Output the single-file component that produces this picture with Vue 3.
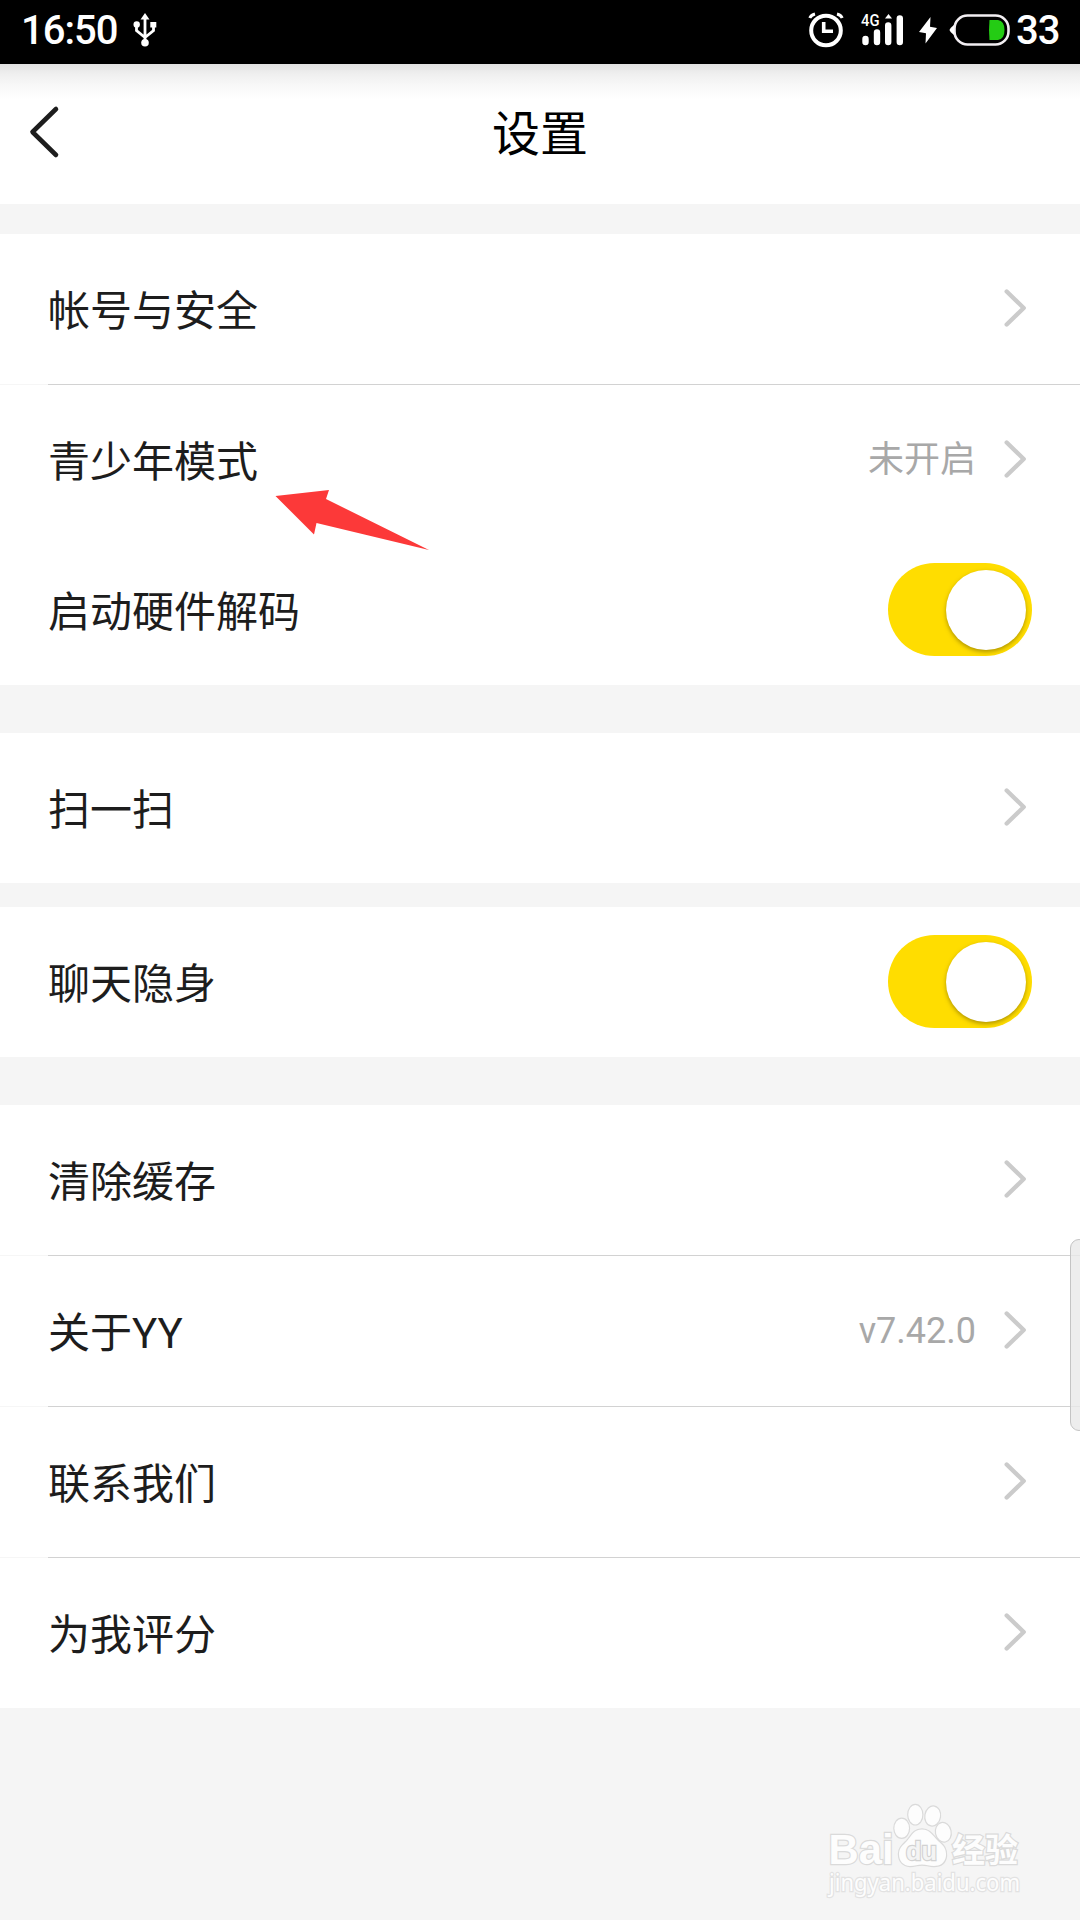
<script setup>
const groups = [
  {
    rows: [
      { label: '帐号与安全', divider: true },
      { label: '青少年模式', value: '未开启' },
      { label: '启动硬件解码', toggle: true },
    ],
    gap: 48,
  },
  { rows: [{ label: '扫一扫' }], gap: 24 },
  { rows: [{ label: '聊天隐身', toggle: true }], gap: 48 },
  {
    rows: [
      { label: '清除缓存', divider: true },
      { label: '关于YY', value: 'v7.42.0', divider: true },
      { label: '联系我们', divider: true },
      { label: '为我评分' },
    ],
    gap: 0,
  },
]
</script>

<template>
  <div class="screen">
    <div class="status">
      <span class="clock">16:50</span>
      <svg class="usb" width="24" height="36" viewBox="0 0 24 36" fill="none" stroke="#fff" stroke-width="2.8">
        <path d="M12 6V29M3.500 13V18.500L12 25.500M20.500 13V18.500L12 25.500" />
        <path d="M12 1L16.500 7.500H7.500Z" fill="#fff" stroke="none" />
        <circle cx="3.700" cy="12.500" r="3.200" fill="#fff" stroke="none" />
        <rect x="17.300" y="10" width="6" height="5.500" fill="#fff" stroke="none" />
        <circle cx="12" cy="30.700" r="3.800" fill="#fff" stroke="none" />
      </svg>
      <svg class="indicators" width="210" height="64" viewBox="800 0 210 64" fill="none">
        <g stroke="#fff">
          <circle cx="826" cy="30.500" r="14.800" stroke-width="4" />
          <path d="M823.700 22V31.300H833" stroke-width="3.600" />
          <path d="M809.800 18Q811 15 815 14M842.200 18Q841 15 837 14" stroke-width="3" />
          <path d="M865.500 39V42M877 32.500V42M888.200 25.500V42M899.800 18.500V42" stroke-width="6.400" stroke-linecap="round" />
        </g>
        <path d="M888.500 14L892 18.500H885Z" fill="#fff" />
        <text x="861" y="26" class="net" textLength="18.500" lengthAdjust="spacingAndGlyphs">4G</text>
        <path d="M930.500 17L919 32L926 33.300L925.500 43.500L937 28L930 26.700Z" fill="#fff" />
        <rect x="954.500" y="15.500" width="54" height="29" rx="13" stroke="#f2eef2" stroke-width="2.600" />
        <path d="M954 25Q950 28 949.500 30Q950 32 954 35Z" fill="#fff" />
        <path d="M989.500 20H998Q1004.500 21 1004.500 30Q1004.500 39 998 40H989.500Q988.500 30 989.500 20Z" fill="#24cc14" />
      </svg>
      <span class="battery">33</span>
    </div>

    <header class="header">
      <svg class="back" width="32" height="54" viewBox="0 0 32 54">
        <path d="M28 4L4.500 27L28 50" fill="none" stroke="#1d1d1d" stroke-width="4.600" stroke-linecap="round" stroke-linejoin="round" />
      </svg>
      <h1>设置</h1>
    </header>

    <main>
      <section v-for="(group, g) in groups" :key="g" class="group" :style="{ marginBottom: group.gap + 'px' }">
        <div v-for="row in group.rows" :key="row.label" class="row" :class="{ divided: row.divider }">
          <span class="label">{{ row.label }}</span>
          <span v-if="row.value" class="value">{{ row.value }}</span>
          <span v-if="row.toggle" class="toggle"><i></i></span>
          <svg v-else class="chevron" width="24" height="40" viewBox="0 0 24 40">
            <path d="M2.700 3.500L19.700 20L2.700 36.500" fill="none" stroke="#cbcbcb" stroke-width="4.400" stroke-linecap="round" stroke-linejoin="round" />
          </svg>
        </div>
      </section>
    </main>

    <svg class="arrow" width="154" height="62" viewBox="275 489 154 62">
      <path d="M275.500 496L329 490L326 499L429 550L316.500 523L314 534.500Z" fill="#fc3939" />
    </svg>

    <div class="handle"></div>

    <svg class="watermark" width="210" height="110" viewBox="820 1795 210 110">
      <g class="mark">
        <text x="828.500" y="1864" font-size="43" font-weight="700" textLength="65" lengthAdjust="spacingAndGlyphs">Bai</text>
        <text x="952" y="1862" class="cjk" font-size="33" font-weight="700" textLength="66">经验</text>
        <ellipse cx="915.300" cy="1814.700" rx="7" ry="9.700" />
        <ellipse cx="932.700" cy="1816" rx="7.300" ry="9.500" transform="rotate(10 932.700 1816)" />
        <ellipse cx="901.700" cy="1828.300" rx="7.300" ry="9.500" />
        <ellipse cx="943.300" cy="1832.300" rx="7.300" ry="9.300" transform="rotate(-12 943.300 1832.300)" />
        <path d="M922 1829.500C930 1829.500 933 1836 938 1841C944 1846 946.500 1849 946 1856C945 1863 940 1866 934 1866C929 1866 926 1864.500 922 1864.500C918 1864.500 915 1866 910 1866C903 1865.500 899 1861 899 1854C899 1848 903 1845 907 1841C912 1835 914 1829.500 922 1829.500Z" />
        <text x="906" y="1860" class="du" font-size="26" font-weight="700" textLength="31" lengthAdjust="spacingAndGlyphs">du</text>
        <text x="829" y="1890.500" class="url" font-size="23" textLength="191" lengthAdjust="spacingAndGlyphs">jingyan.baidu.com</text>
      </g>
    </svg>
  </div>
</template>

<style>
body {
  margin: 0;
  background: #f5f5f5;
}
</style>

<style scoped>
.screen {
  position: relative;
  width: 1080px;
  height: 1920px;
  overflow: hidden;
  background: #f5f5f5;
  font-family: Roboto, 'Noto Sans CJK SC', sans-serif;
}
.status {
  display: flex;
  align-items: center;
  height: 64px;
  padding: 0 21px;
  background: #000;
  color: #fff;
  font-size: 40px;
  font-weight: 500;
  line-height: 61px;
  letter-spacing: -1px;
}
.clock,
.battery {
  height: 64px;
}
.usb {
  margin: -4px 0 0 16px;
}
.indicators {
  margin-left: auto;
  letter-spacing: 0;
}
.battery {
  width: 43px;
  margin-left: 6px;
}
.net {
  fill: #fff;
  font-size: 16px;
  font-weight: 500;
}
.header {
  display: grid;
  grid-template-columns: 120px 1fr 120px;
  align-items: center;
  height: 140px;
  margin-bottom: 30px;
  background: linear-gradient(#e2e2e2 0, #efefef 10px, #f7f7f7 20px, #fff 36px);
}
.back {
  margin: -5px 0 0 28px;
}
h1 {
  height: 140px;
  margin: 0;
  color: #000;
  text-align: center;
  font-size: 48px;
  font-weight: 400;
  line-height: 142px;
}
.group {
  background: #fff;
}
.row {
  display: flex;
  align-items: center;
  height: 150px;
  padding: 0 52px 0 48px;
}
.divided {
  padding-bottom: 1px;
  background: linear-gradient(90deg, #f6f6f6 48px, #d2d2d2 48px) bottom / 100% 1px no-repeat;
}
.label {
  flex: 1;
  height: 150px;
  color: #1d1d1d;
  font-size: 42px;
  line-height: 155px;
}
.value {
  margin-right: 28px;
  color: #a8a8a8;
  font-size: 36px;
  line-height: 150px;
}
.chevron {
  margin-top: -3px;
}
.toggle {
  display: flex;
  justify-content: flex-end;
  box-sizing: border-box;
  width: 144px;
  height: 93px;
  margin: -1px -4px 0 0;
  padding: 6.5px 6.5px 0 0;
  border-radius: 47px;
  background: #ffdd00;
}
.toggle i {
  width: 80px;
  height: 80px;
  border-radius: 50%;
  background: #fff;
  box-shadow: 0 2px 4px rgba(110, 90, 0, 0.55);
}
.arrow {
  position: absolute;
  left: 275px;
  top: 489px;
}
.handle {
  position: absolute;
  right: -8px;
  top: 1239px;
  box-sizing: border-box;
  width: 18px;
  height: 192px;
  border: 1px solid #c4c4c4;
  border-radius: 14px;
  background: rgba(232, 232, 232, 0.8);
}
.watermark {
  position: absolute;
  left: 820px;
  top: 1795px;
}
.mark {
  fill: #fdfdfd;
  stroke: #dadada;
  stroke-width: 2.4px;
  paint-order: stroke;
  font-family: 'Liberation Sans', sans-serif;
}
.cjk {
  font-family: 'Noto Sans CJK SC', sans-serif;
}
.du {
  fill: #f4f4f4;
  stroke: #d2d2d2;
  stroke-width: 2.4px;
}
.url {
  stroke: #e2e2e2;
  font-family: 'Noto Sans', sans-serif;
}
</style>
